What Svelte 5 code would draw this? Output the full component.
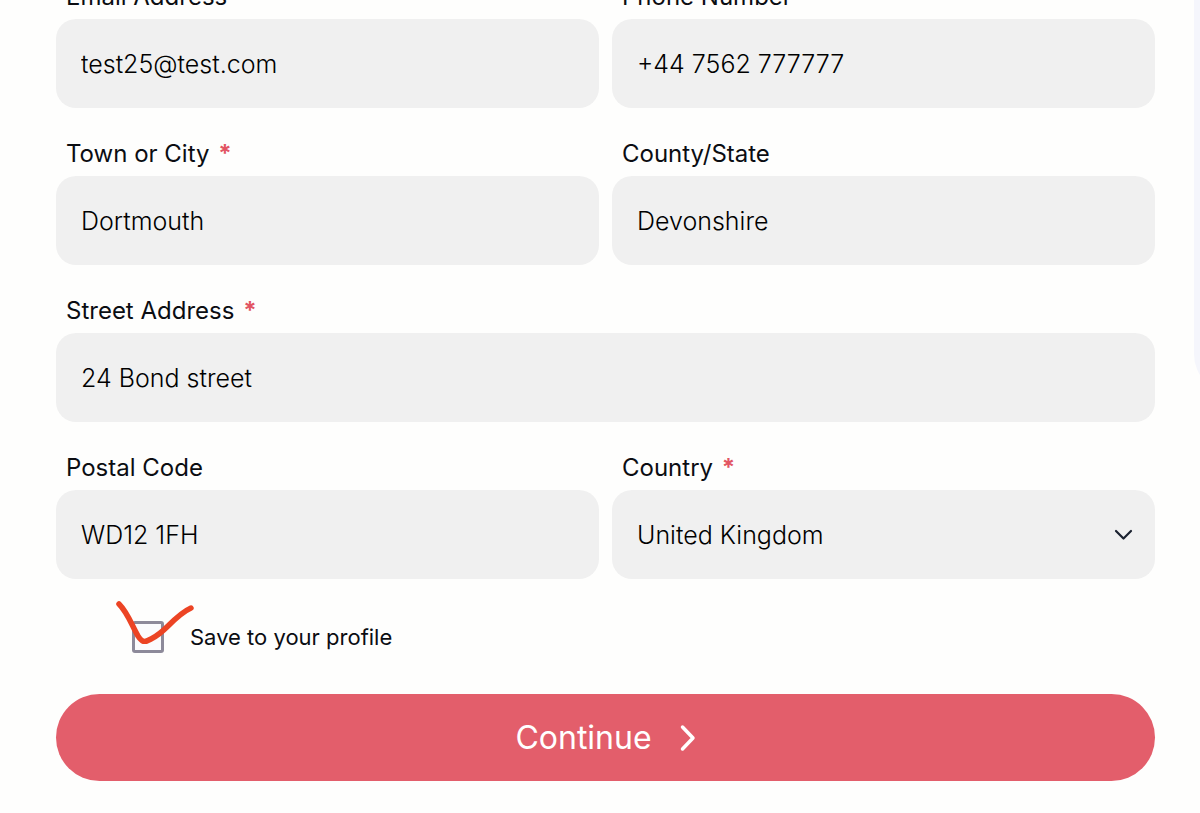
<script>
  let email = $state('test25@test.com');
  let phone = $state('+44 7562 777777');
  let city = $state('Dortmouth');
  let county = $state('Devonshire');
  let street = $state('24 Bond street');
  let postal = $state('WD12 1FH');
  let country = $state('United Kingdom');
  let save = $state(false);
</script>

<div class="page">
  <form onsubmit={(e) => e.preventDefault()}>
    <div class="grid">
      <div class="field">
        <label for="email">Email Address</label>
        <input id="email" type="text" bind:value={email} />
      </div>
      <div class="field">
        <label for="phone">Phone Number</label>
        <input id="phone" type="tel" bind:value={phone} />
      </div>
      <div class="field">
        <label for="city">Town or City <span class="req">*</span></label>
        <input id="city" type="text" bind:value={city} />
      </div>
      <div class="field">
        <label for="county">County/State</label>
        <input id="county" type="text" bind:value={county} />
      </div>
      <div class="field wide">
        <label for="street">Street Address <span class="req">*</span></label>
        <input id="street" type="text" bind:value={street} />
      </div>
      <div class="field">
        <label for="postal">Postal Code</label>
        <input id="postal" type="text" bind:value={postal} />
      </div>
      <div class="field">
        <label for="country">Country <span class="req">*</span></label>
        <div class="select">
          <select id="country" bind:value={country}>
            <option>United Kingdom</option>
          </select>
          <svg class="chevron" width="20" height="12" viewBox="0 0 20 12" aria-hidden="true">
            <path d="M3 2 L10.500 9.500 L18 2" fill="none" stroke="#1b2230" stroke-width="2.200" stroke-linecap="round" stroke-linejoin="round" />
          </svg>
        </div>
      </div>
    </div>

    <div class="save">
      <div class="box">
        <input id="save" type="checkbox" bind:checked={save} />
        <svg class="mark" width="80" height="48" viewBox="0 0 80 48" aria-hidden="true">
          <path d="M5 5 C14 14 18 27 24 37 C28 43 30 44 37 40 C43 37 48 33 54 27 C61 20 68 13 77 9" fill="none" stroke="#ec4424" stroke-width="5.500" stroke-linecap="round" stroke-linejoin="round" />
        </svg>
      </div>
      <label for="save">Save to your profile</label>
    </div>

    <button type="submit">
      Continue
      <svg width="18" height="30" viewBox="0 0 18 30" aria-hidden="true">
        <path d="M4.500 4 L15 15 L4.500 26" fill="none" stroke="#fff" stroke-width="3.500" stroke-linecap="round" stroke-linejoin="round" />
      </svg>
    </button>
  </form>
  <aside><div class="panel"></div></aside>
</div>

<style>
  :global(body) {
    background: #fefefd;
  }
  .page {
    display: flex;
    overflow: hidden;
    font-family: Inter, sans-serif;
    color: #0b0d12;
  }
  form {
    flex: 1;
    min-width: 0;
    margin-top: -19px;
    padding: 0 39px 32px 56px;
  }
  .grid {
    display: grid;
    grid-template-columns: 1fr 1fr;
    gap: 30px 13px;
  }
  .field {
    display: flex;
    flex-direction: column;
    gap: 6px;
    min-width: 0;
  }
  .wide {
    grid-column: 1 / -1;
  }
  label {
    font-size: 24px;
    line-height: 32px;
  }
  .field label {
    padding-left: 10px;
  }
  .req {
    margin-left: 2px;
    color: #e25563;
    font-weight: 700;
  }
  .field input,
  select {
    box-sizing: border-box;
    width: 100%;
    height: 89px;
    padding: 0 25px;
    border: 0;
    border-radius: 20px;
    background: #f0f0f0;
    color: #000;
    font-family: inherit;
    font-size: 25px;
    font-weight: 300;
    appearance: none;
  }
  .select {
    display: grid;
    align-items: center;
  }
  select,
  .chevron {
    grid-area: 1 / 1;
  }
  .chevron {
    justify-self: end;
    margin-right: 22px;
    pointer-events: none;
  }
  .save {
    display: flex;
    align-items: center;
    gap: 26px;
    margin: 42px 0 41px;
    padding-left: 76px;
  }
  .save label {
    font-size: 22px;
  }
  .box {
    position: relative;
    display: flex;
  }
  .box input {
    box-sizing: border-box;
    width: 32px;
    height: 32px;
    margin: 0;
    border: 3px solid #8d8a9a;
    border-radius: 3px;
    background: #fbfbfd;
    appearance: none;
  }
  .mark {
    position: absolute;
    left: -18px;
    top: -22px;
    pointer-events: none;
  }
  button {
    display: flex;
    align-items: center;
    justify-content: center;
    gap: 26px;
    width: 100%;
    height: 87px;
    border: 0;
    border-radius: 44px;
    background: #e35e6b;
    color: #fff;
    font-family: inherit;
    font-size: 32px;
    font-weight: 400;
  }
  aside {
    flex: none;
    width: 6px;
    overflow: hidden;
  }
  .panel {
    width: 400px;
    height: 394px;
    border-radius: 0 0 40px 40px;
    background: #f5f6fc;
  }
</style>
